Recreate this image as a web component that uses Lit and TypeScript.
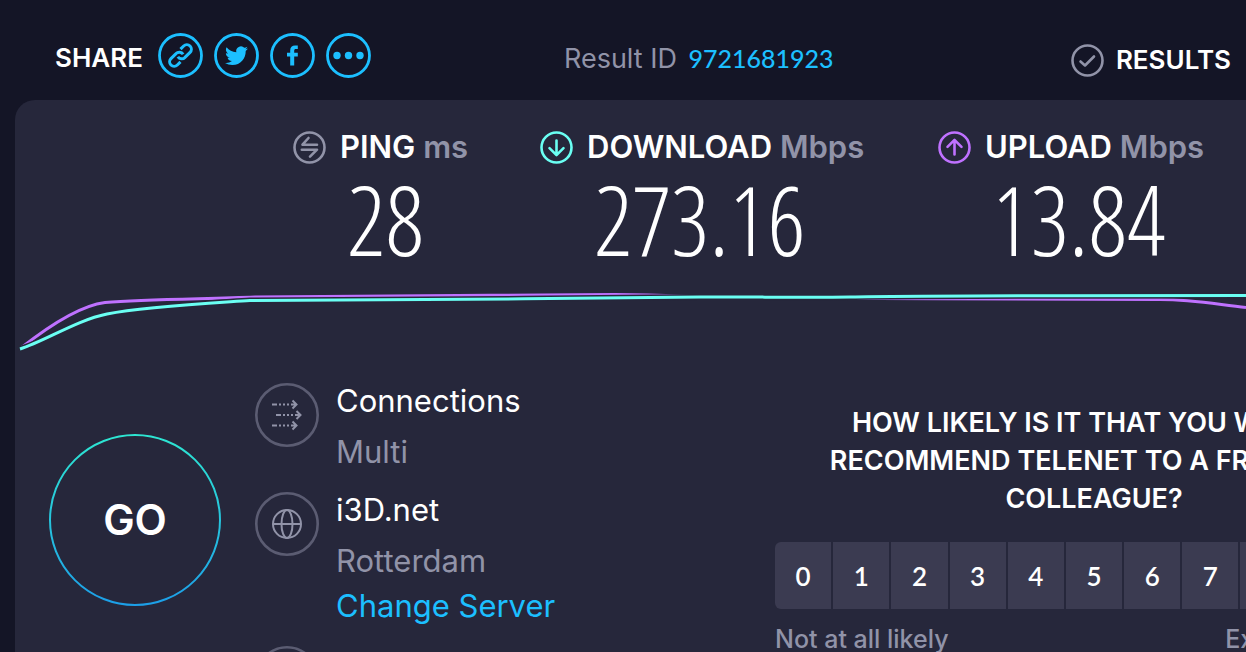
import { LitElement, html, css, svg } from "lit";
import { customElement, property } from "lit/decorators.js";

const pingIcon = svg`<path d="M15.500 7 9.500 13.700H24M8.800 18.700H24L17 25.700" />`;
const downIcon = svg`<path d="M16.500 9.500V23.500M9.500 17.200 16.500 24.200 23.500 17.200" />`;
const upIcon = svg`<path d="M16.500 23.500V9.500M9.500 15.800 16.500 8.800 23.500 15.800" />`;

@customElement("metric-card")
export class MetricCard extends LitElement {
  @property() label = "";
  @property() unit = "";
  @property() value = "";
  @property() kind = "ping";

  static styles = css`
    :host { display: block; white-space: nowrap; }
    .head { display: flex; align-items: center; gap: 14px; height: 36px; }
    .icon { width: 33px; height: 33px; flex: none; fill: none; stroke-width: 2.6; stroke-linecap: round; stroke-linejoin: round; }
    .ping { stroke: #9193a8; }
    .download { stroke: #6afff3; }
    .upload { stroke: #bf71ff; }
    .label { font: 600 31px/36px Inter, sans-serif; color: #fff; }
    .unit { color: #9193a8; }
    .value { padding-left: 54px; font: 200 96px/108px "Open Sans Condensed Light", "Roboto Condensed", sans-serif; color: #fff; }
  `;

  render() {
    const glyph = this.kind === "ping" ? pingIcon : this.kind === "download" ? downIcon : upIcon;
    return html`
      <div class="head">
        <svg class="icon ${this.kind}" viewBox="0 0 33 33" aria-hidden="true">
          <circle cx="16.500" cy="16.500" r="15" />${glyph}
        </svg>
        <span class="label">${this.label} <span class="unit">${this.unit}</span></span>
      </div>
      <div class="value">${this.value}</div>
    `;
  }
}

@customElement("app-root")
export class AppRoot extends LitElement {
  static styles = css`
    :host { display: block; font-family: Inter, sans-serif; color: #fff; background: #141526; }
    * { box-sizing: border-box; }
    a { color: #1cbfff; text-decoration: none; }
    button { border: 0; padding: 0; background: none; color: inherit; font-family: inherit; cursor: pointer; }
    .page { height: 100vh; display: flex; flex-direction: column; overflow: hidden; white-space: nowrap; }
    .top { flex: none; height: 100px; display: flex; align-items: center; padding: 16px 15px 0 55px; }
    .share { display: flex; align-items: center; gap: 15px; }
    .caps { font: 600 26px/32px Inter, sans-serif; }
    .links { display: flex; gap: 11px; padding-bottom: 6px; }
    .round { width: 45px; height: 45px; display: block; }
    .round svg { display: block; width: 45px; height: 45px; }
    .result { margin-left: 193px; font: 400 27px/32px Inter, sans-serif; color: #9193a8; }
    .result a { font: 500 25px/32px Lato, sans-serif; margin-left: 4px; }
    .results { margin-left: auto; display: flex; align-items: center; gap: 12px; color: #fff; padding-top: 4px; }
    .results svg { width: 33px; height: 33px; }
    .panel { flex: 1; margin-left: 15px; border-radius: 20px 0 0 0; background: #26273b; overflow: hidden; }
    .metrics { display: grid; grid-template-columns: 247px 398px auto; padding: 29px 0 0 278px; }
    .chart { display: block; width: 100%; height: 80px; margin-top: 7px; fill: none; stroke-width: 3; }
    .chart path { vector-effect: non-scaling-stroke; }
    .chart .halo { stroke: #26273b; stroke-width: 6; }
    .lower { display: flex; align-items: flex-start; padding: 23px 0 0 34px; }
    .go { flex: none; width: 172px; height: 172px; margin-top: 51px; display: grid; place-items: center; font: 600 42px/48px Inter, sans-serif; }
    .go > * { grid-area: 1 / 1; }
    .go svg { width: 172px; height: 172px; }
    .details { flex: none; width: 520px; margin-left: 34px; display: grid; gap: 22px; }
    .row { display: flex; gap: 17px; }
    .row > svg { width: 64px; height: 64px; flex: none; }
    .lines { display: flex; flex-direction: column; font: 400 31px/36px Inter, sans-serif; }
    .sub { margin-top: 15px; color: #9193a8; }
    .change { margin-top: 9px; }
    .survey { flex: none; width: 638px; padding-top: 21px; }
    .question { margin: 0; text-align: center; font: 600 27px/38px Inter, sans-serif; }
    .scale { display: grid; grid-template-columns: repeat(11, 1fr); gap: 2px; margin-top: 24px; border-radius: 6px; overflow: hidden; }
    .scale button { height: 67px; background: #3b3b51; font: 600 26px/32px Lato, sans-serif; }
    .ends { display: flex; justify-content: space-between; margin-top: 14px; font: 500 25px/32px Inter, sans-serif; color: #9193a8; }
  `;

  private ring(glyph: unknown) {
    return html`<svg viewBox="0 0 45 45" aria-hidden="true">
      <circle cx="22.500" cy="22.500" r="21" fill="none" stroke="#1cbfff" stroke-width="2.800" />${glyph}
    </svg>`;
  }

  private detailIcon(glyph: unknown) {
    return html`<svg viewBox="0 0 64 64" aria-hidden="true" fill="none" stroke="#9193a8" stroke-width="2">
      <circle cx="32" cy="32" r="30.700" stroke="#5b5c72" stroke-width="2.600" />${glyph}
    </svg>`;
  }

  private arrow(x: number, y: number) {
    return svg`<path d="M${x} ${y}h5M${x + 7} ${y}h2M${x + 11} ${y}h2M${x + 15} ${y}h2M${x + 19} ${y}h6M${x + 20.5} ${y - 4}l4 4l-4 4" />`;
  }

  render() {
    return html`
      <div class="page">
        <header class="top">
          <div class="share">
            <span class="caps">SHARE</span>
            <nav class="links">
              <a class="round" href="#link" aria-label="Copy link">${this.ring(svg`
                <g transform="translate(22.500 22.500) rotate(-45)" fill="none" stroke="#1cbfff" stroke-width="3">
                  <path d="M-4.500 4.500H-9A4.500 4.500 0 0 1 -9 -4.500H-1.800A4.500 4.500 0 0 1 2.700 1" />
                  <path d="M4.500 -4.500H9A4.500 4.500 0 0 1 9 4.500H1.800A4.500 4.500 0 0 1 -2.700 -1" />
                </g>`)}</a>
              <a class="round" href="#twitter" aria-label="Twitter">${this.ring(svg`
                <path transform="translate(11 11.200) scale(.96)" fill="#1cbfff" d="M23.950 4.570a10 10 0 0 1-2.820.770 4.960 4.960 0 0 0 2.160-2.720c-.950.550-2 .950-3.130 1.180a4.920 4.920 0 0 0-8.380 4.480C7.690 8.090 4.070 6.130 1.640 3.160a4.820 4.820 0 0 0-.670 2.480c0 1.710.870 3.210 2.190 4.100a4.900 4.900 0 0 1-2.230-.620v.060a4.920 4.920 0 0 0 3.950 4.830 5 5 0 0 1-2.210.080 4.940 4.940 0 0 0 4.600 3.420A9.870 9.870 0 0 1 0 19.540a13.990 13.990 0 0 0 7.550 2.210c9.050 0 14-7.500 14-13.980 0-.210 0-.420-.020-.630a9.940 9.940 0 0 0 2.460-2.550z" />`)}</a>
              <a class="round" href="#facebook" aria-label="Facebook">${this.ring(svg`
                <path fill="#1cbfff" d="M20.200 32.500V23.600H17V19.800H20.200V17.500C20.200 14 22.100 12.400 25 12.400H27.800V16.100H26C24.600 16.100 24.200 16.700 24.200 17.900V19.800H27.800V23.600H24.200V32.500Z" />`)}</a>
              <a class="round" href="#more" aria-label="More">${this.ring(svg`
                <g fill="#1cbfff"><circle cx="11" cy="22.500" r="3.700" /><circle cx="22.500" cy="22.500" r="3.700" /><circle cx="34" cy="22.500" r="3.700" /></g>`)}</a>
            </nav>
          </div>
          <div class="result">Result ID <a href="#result">9721681923</a></div>
          <a class="results caps" href="#results">
            <svg viewBox="0 0 33 33" aria-hidden="true" fill="none" stroke="#9193a8" stroke-width="2.600" stroke-linecap="round" stroke-linejoin="round">
              <circle cx="16.500" cy="16.500" r="15" /><path d="M9.500 17.500 14 21.500 23 12.500" />
            </svg>
            RESULTS
          </a>
        </header>
        <main class="panel">
          <section class="metrics">
            <metric-card kind="ping" label="PING" unit="ms" value="28"></metric-card>
            <metric-card kind="download" label="DOWNLOAD" unit="Mbps" value="273.16"></metric-card>
            <metric-card kind="upload" label="UPLOAD" unit="Mbps" value="13.84"></metric-card>
          </section>
          <svg class="chart" viewBox="0 0 1231 80" preserveAspectRatio="none" aria-hidden="true">
            <path stroke="#bf71ff" d="M6 68C25 53 62 26 90 22.500C130 19 190 19 240 17C340 15.500 480 15.500 600 14.500C660 14.500 680 18 740 18C860 18.500 1040 19 1145 19.500C1180 19.500 1205 25 1231 27.500" />
            <path class="halo" d="M5 69C30 61 62 40 92 34C130 26.500 190 23.500 235 20.500C350 20 540 19 685 17C750 17 800 17.500 835 17C900 15.500 1080 15.500 1231 15.500" />
            <path stroke="#6afff3" d="M5 69C30 61 62 40 92 34C130 26.500 190 23.500 235 20.500C350 20 540 19 685 17C750 17 800 17.500 835 17C900 15.500 1080 15.500 1231 15.500" />
          </svg>
          <section class="lower">
            <button class="go" type="button">
              <svg viewBox="0 0 172 172" aria-hidden="true">
                <defs><linearGradient id="g" x1="0" y1="0" x2="0" y2="1"><stop offset="0" stop-color="#2de6d2" /><stop offset=".5" stop-color="#27c4dc" /><stop offset="1" stop-color="#1c9fe8" /></linearGradient></defs>
                <circle cx="86" cy="86" r="85" fill="none" stroke="url(#g)" stroke-width="2" />
              </svg>
              <span>GO</span>
            </button>
            <div class="details">
              <div class="row">
                ${this.detailIcon(svg`${this.arrow(17, 21.5)}${this.arrow(21, 32)}${this.arrow(17, 42.5)}`)}
                <div class="lines"><span>Connections</span><span class="sub">Multi</span></div>
              </div>
              <div class="row">
                ${this.detailIcon(svg`<circle cx="32" cy="32" r="14" /><ellipse cx="32" cy="32" rx="5.500" ry="14" /><path d="M18 32H46" />`)}
                <div class="lines"><span>i3D.net</span><span class="sub">Rotterdam</span><a class="change" href="#server">Change Server</a></div>
              </div>
              <div class="row">${this.detailIcon(svg`<circle cx="32" cy="27" r="6" /><path d="M20 45C22 33 42 33 44 45Z" />`)}</div>
            </div>
            <div class="survey">
              <h2 class="question">HOW LIKELY IS IT THAT YOU WOULD<br />RECOMMEND TELENET TO A FRIEND OR<br />COLLEAGUE?</h2>
              <div class="scale">${Array.from({ length: 11 }, (_, i) => html`<button type="button">${i}</button>`)}</div>
              <div class="ends"><span>Not at all likely</span><span>Extremely likely</span></div>
            </div>
          </section>
        </main>
      </div>
    `;
  }
}
